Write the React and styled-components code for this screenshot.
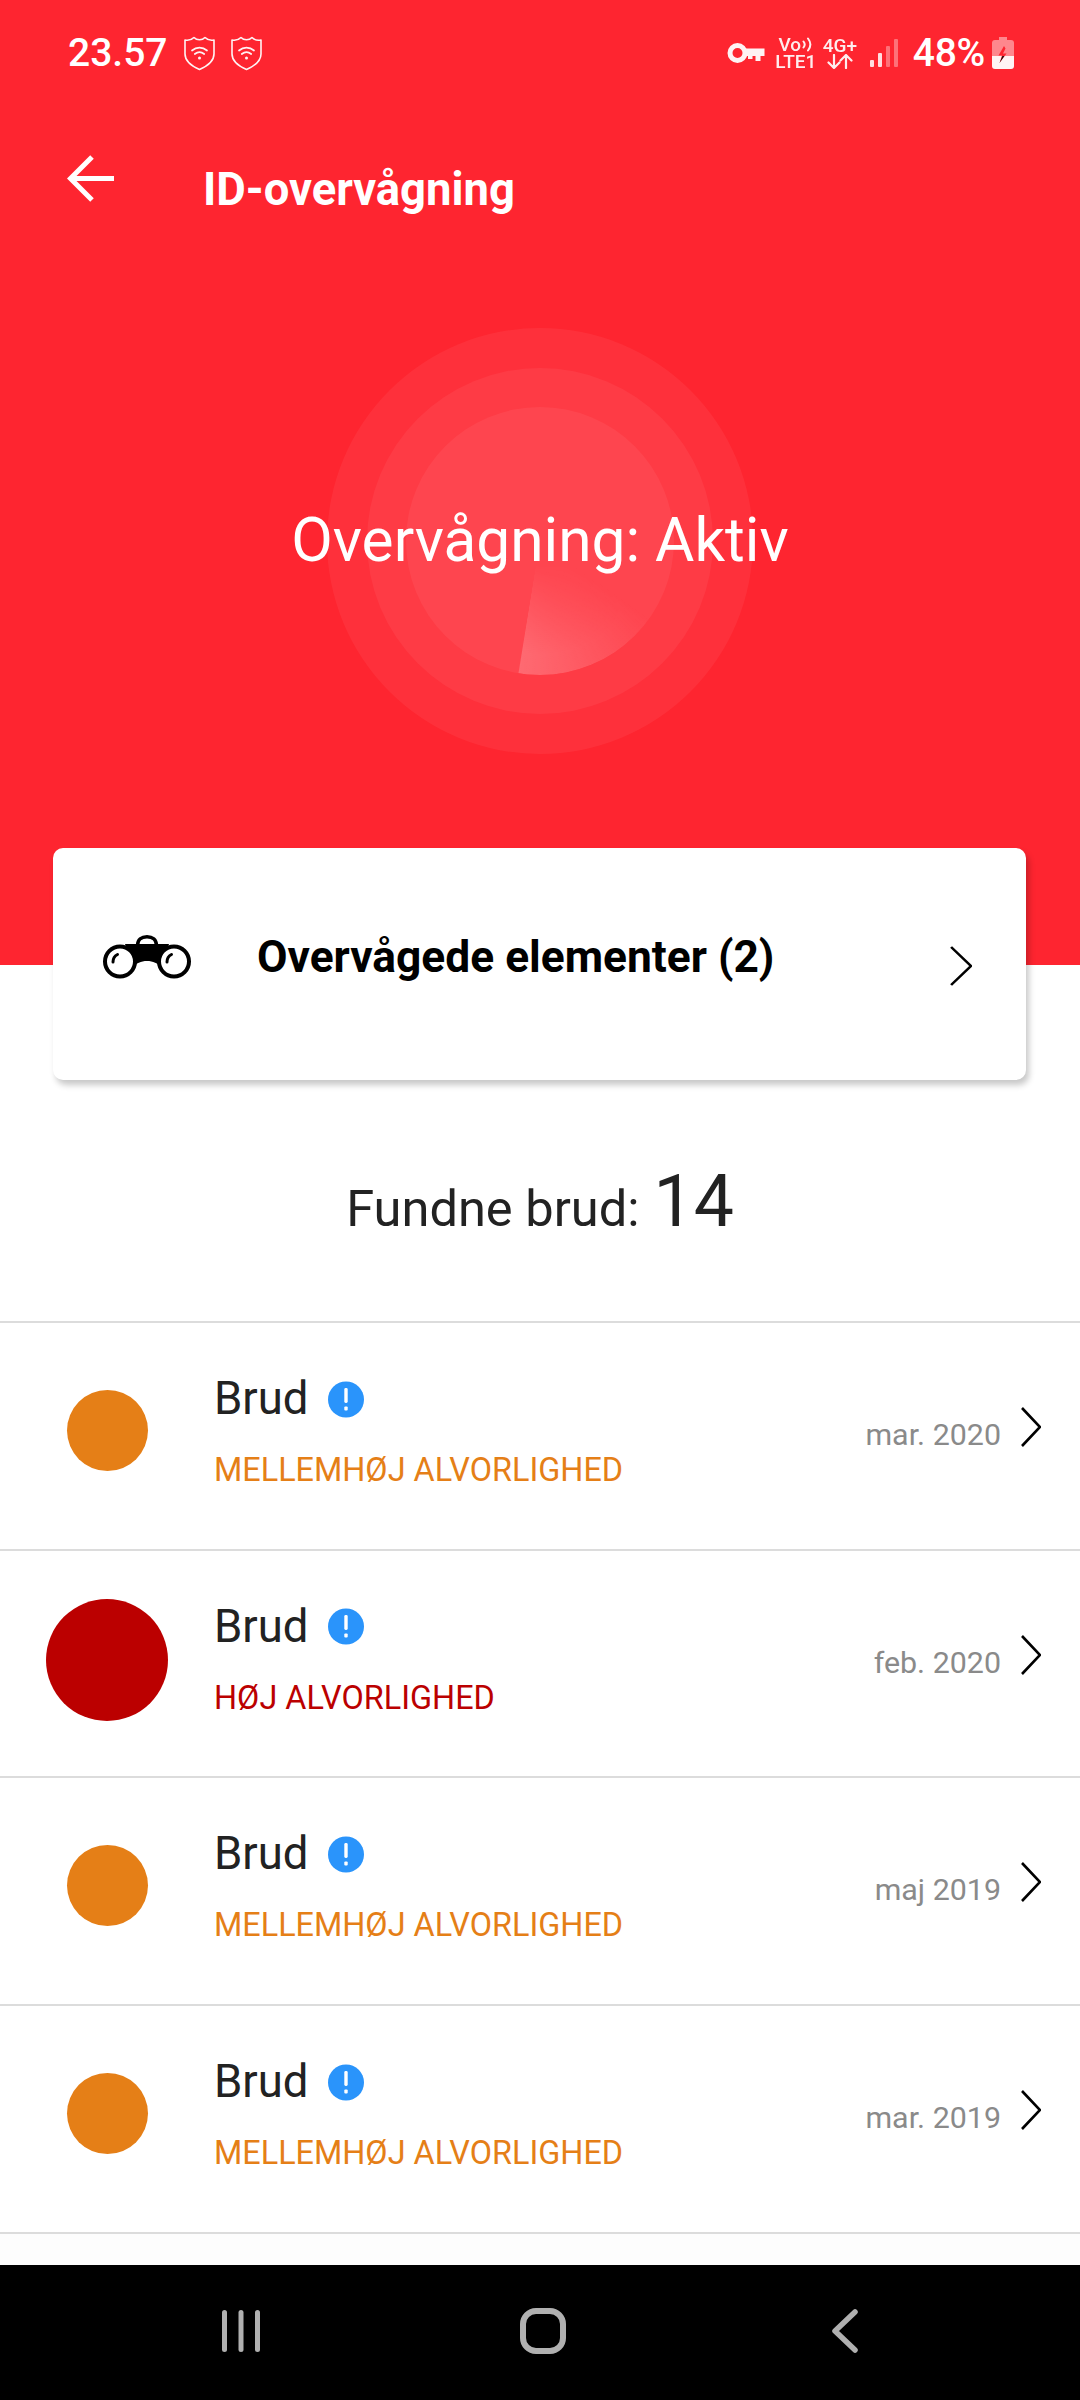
import React from "react";
import styled, { createGlobalStyle } from "styled-components";

const GlobalStyle = createGlobalStyle`
  html, body {
    margin: 0;
    padding: 0;
    background: #fff;
  }
  * {
    box-sizing: border-box;
  }
`;

const Page = styled.div`
  width: 1080px;
  height: 2400px;
  display: flex;
  flex-direction: column;
  overflow: hidden;
  background: #fff;
  font-family: Roboto, "Liberation Sans", sans-serif;
`;

const Header = styled.header`
  height: 965px;
  flex-shrink: 0;
  background: #fe2530;
  color: #fff;
`;

const StatusBar = styled.div`
  height: 150px;
  padding: 31px 66px 0 68px;
  display: flex;
  align-items: flex-start;
  justify-content: space-between;
`;

const StatusGroup = styled.div`
  display: flex;
  align-items: center;
  height: 44px;
`;

const Clock = styled.span`
  font-size: 39px;
  font-weight: 500;
  line-height: 44px;
  margin-right: 15px;
`;

const NetworkStack = styled.div`
  width: ${(p) => p.$width}px;
  margin-left: ${(p) => p.$left || 0}px;
  display: flex;
  flex-direction: column;
  align-items: center;
  font-size: 19px;
  font-weight: 500;
  line-height: 17px;
  opacity: 0.92;
`;

const VoRow = styled.div`
  display: flex;
  align-items: center;
  gap: 1px;
`;

const Percent = styled.span`
  font-size: 39px;
  font-weight: 500;
  line-height: 44px;
  letter-spacing: -0.3px;
`;

const Toolbar = styled.div`
  height: 100px;
  padding: 5px 0 0 67px;
  display: flex;
  align-items: flex-start;
`;

const BackButton = styled.div`
  width: 136px;
  flex-shrink: 0;
  line-height: 0;
`;

const Title = styled.h1`
  margin: 3px 0 0;
  font-size: 45.4px;
  font-weight: 700;
  line-height: 64px;
`;

const RadarWrap = styled.div`
  margin-top: 78px;
  display: flex;
  justify-content: center;
`;

const Ring = styled.div`
  position: relative;
  width: ${(p) => p.$size}px;
  height: ${(p) => p.$size}px;
  border-radius: 50%;
  background: rgba(255, 255, 255, ${(p) => p.$alpha});
  display: flex;
  align-items: center;
  justify-content: center;
`;

const Sweep = styled.div`
  position: absolute;
  inset: 0;
  border-radius: 50%;
  background: conic-gradient(
    from 0deg,
    rgba(255, 255, 255, 0) 0deg,
    rgba(255, 255, 255, 0) 125deg,
    rgba(255, 255, 255, 0.2) 189deg,
    rgba(255, 255, 255, 0) 189.5deg
  );
  mask-image: radial-gradient(circle, rgba(0, 0, 0, 0) 12%, #000 60%);
`;

const RadarLabel = styled.div`
  position: absolute;
  left: 50%;
  top: 50%;
  transform: translate(-50%, -50%);
  font-size: 60.4px;
  line-height: 70px;
  white-space: nowrap;
`;

const ElementsCard = styled.div`
  position: relative;
  z-index: 2;
  margin: -117px 54px 0 53px;
  height: 232px;
  flex-shrink: 0;
  padding: 0 54px 14px 50px;
  display: flex;
  align-items: center;
  background: #fff;
  border-radius: 10px;
  box-shadow: 3px 5px 6px rgba(0, 0, 0, 0.22);
`;

const CardIcon = styled.div`
  width: 154px;
  flex-shrink: 0;
  line-height: 0;
`;

const CardLabel = styled.div`
  flex: 1;
  font-size: 44.3px;
  font-weight: 700;
  line-height: 56px;
  color: #000;
`;

const CardChevron = styled.div`
  line-height: 0;
  margin-top: 18px;
`;

const Summary = styled.div`
  height: 243px;
  flex-shrink: 0;
  padding-top: 80px;
  text-align: center;
  font-size: 50.6px;
  line-height: 84px;
  color: #222;
  border-bottom: 2px solid #dcdcdc;
`;

const SummaryCount = styled.span`
  font-size: 71.5px;
  margin-left: 14px;
`;

const BreachRow = styled.div`
  height: 227.7px;
  flex-shrink: 0;
  display: flex;
  align-items: flex-start;
  border-bottom: 2px solid #dcdcdc;
`;

const DotCell = styled.div`
  width: 214px;
  height: 214px;
  flex-shrink: 0;
  display: flex;
  align-items: center;
  justify-content: center;
`;

const Dot = styled.div`
  width: ${(p) => (p.$high ? 122 : 81)}px;
  height: ${(p) => (p.$high ? 122 : 81)}px;
  margin-top: ${(p) => (p.$high ? 5 : 0)}px;
  border-radius: 50%;
  background: ${(p) => (p.$high ? "#bb0000" : "#e57f17")};
`;

const BreachText = styled.div`
  flex: 1;
  padding-top: 50px;
`;

const BreachTitle = styled.div`
  display: flex;
  align-items: center;
  gap: 19px;
  font-size: 45.5px;
  line-height: 52px;
  color: #222;
`;

const Severity = styled.div`
  margin-top: 25px;
  font-size: 32.4px;
  line-height: 40px;
  color: ${(p) => (p.$high ? "#bb0000" : "#e57f17")};
`;

const BreachMeta = styled.div`
  padding: 84px 39px 0 0;
  display: flex;
  align-items: flex-start;
  gap: 20px;
`;

const DateText = styled.span`
  font-size: 30.4px;
  line-height: 44px;
  color: #8a8a8a;
  margin-top: 6px;
`;

const Spacer = styled.div`
  flex: 1;
  background: #fdfdfd;
`;

const NavBar = styled.nav`
  height: 135px;
  flex-shrink: 0;
  background: #000;
  display: flex;
  align-items: center;
  padding: 0 0 3px 222px;
`;

const NavItem = styled.div`
  margin-right: ${(p) => p.$right || 0}px;
  line-height: 0;
`;

const ShieldIcon = () => (
  <svg width="33" height="36" viewBox="0 0 33 36" fill="none" stroke="#fff" strokeLinecap="round" strokeLinejoin="round" style={{ marginRight: 14, opacity: 0.95 }}>
    <path d="M2 5c3.500.6 7-.4 9-2.500 1.400 1.500 3.400 2.300 5.500 2.300S20.600 4 22 2.500C24 4.600 27.500 5.600 31 5v14c0 7-6.500 12-14.500 15.500C8.500 31 2 26 2 19V5z" strokeWidth="1.600" />
    <path d="M9 15.500c4.500-3.800 10.500-3.800 15 0M11.800 19c3-2.400 6.400-2.400 9.400 0" strokeWidth="1.700" />
    <circle cx="16.500" cy="23" r="1.500" fill="#fff" stroke="none" />
  </svg>
);

const KeyIcon = () => (
  <svg width="38" height="22" viewBox="0 0 38 22" fill="none" style={{ marginRight: 9, opacity: 0.95 }}>
    <circle cx="10.500" cy="11" r="7.500" stroke="#fff" strokeWidth="5" />
    <path d="M18 6.500h19.500v7.500h-4v5h-5v-5h-3v3h-4.500v-3H18z" fill="#fff" />
  </svg>
);

const VoWaves = () => (
  <svg width="11" height="15" viewBox="0 0 11 15" fill="none" stroke="#fff" strokeWidth="2" strokeLinecap="round">
    <path d="M1.500 4.500c1.600 2 1.600 4 0 6M6 1.500c3 3.800 3 8.200 0 12" />
  </svg>
);

const TransferArrows = () => (
  <svg width="26" height="15" viewBox="0 0 26 15" fill="none" stroke="#fff" strokeWidth="2.200" strokeLinecap="round" strokeLinejoin="round">
    <path d="M7 1v12.500M1.500 8.500L7 14l5.500-5.500M19 14V1.500M13.500 6.500L19 1l5.500 5.500" />
  </svg>
);

const SignalBars = () => (
  <svg width="28" height="30" viewBox="0 0 28 30" style={{ margin: "0 15px 0 12px" }}>
    <rect x="0" y="22" width="4" height="7" rx="1" fill="#fff" fillOpacity="0.85" />
    <rect x="8" y="15" width="4" height="14" rx="1" fill="#fff" fillOpacity="0.85" />
    <rect x="16" y="8" width="4" height="21" rx="1" fill="#fff" fillOpacity="0.35" />
    <rect x="24" y="1" width="4" height="28" rx="1" fill="#fff" fillOpacity="0.35" />
  </svg>
);

const BatteryIcon = () => (
  <svg width="22" height="32" viewBox="0 0 22 32" style={{ marginLeft: 7 }}>
    <path d="M7 0h8v3H7z" fill="#fff" fillOpacity="0.45" />
    <path d="M3 3h16a3 3 0 0 1 3 3v13H0V6a3 3 0 0 1 3-3z" fill="#fff" fillOpacity="0.45" />
    <path d="M0 19h22v10a3 3 0 0 1-3 3H3a3 3 0 0 1-3-3z" fill="#fff" fillOpacity="0.95" />
    <path d="M12 9L6.500 18.500h3.500L7.500 26l7-9.500H11l2.500-5z" fill="#fe2530" />
    <path d="M10.500 19L7.500 26l4.800-7z" fill="#111" />
  </svg>
);

const BackArrow = () => (
  <svg width="48" height="48" viewBox="0 0 48 48" fill="none" stroke="#fff" strokeWidth="5">
    <path d="M47 23.500H4M25 2L3.500 23.500 25 45" />
  </svg>
);

const Binoculars = () => (
  <svg width="88" height="44" viewBox="0 0 88 44" fill="none" stroke="#000">
    <path d="M34.500 10.500C34.500 4.500 38.500 1.700 44 1.700s9.500 2.800 9.500 8.800" strokeWidth="3.400" />
    <path d="M22 9h44l-8 24c-3-5-8-7-14-7s-11 2-14 7z" fill="#000" stroke="none" />
    <circle cx="17" cy="26.500" r="15" strokeWidth="4" fill="#fff" />
    <circle cx="71" cy="26.500" r="15" strokeWidth="4" fill="#fff" />
    <path d="M10 27c0-3.500 1.500-6 4.500-7.500M64 27c0-3.500 1.500-6 4.500-7.500" strokeWidth="3" strokeLinecap="round" />
  </svg>
);

const Chevron = ({ w = 20, h = 40, stroke = 2.6 }) => (
  <svg width={w} height={h} viewBox="0 0 20 40" fill="none" stroke="#000" strokeWidth={stroke} preserveAspectRatio="none">
    <path d="M1 1l18 19L1 39" />
  </svg>
);

const InfoIcon = () => (
  <svg width="36" height="37" viewBox="0 0 36 37">
    <circle cx="18" cy="18.500" r="18" fill="#2a94fb" />
    <rect x="16.300" y="7" width="3.400" height="15" rx="1.400" fill="#fff" />
    <rect x="16.300" y="25.500" width="3.400" height="4" rx="1" fill="#fff" />
  </svg>
);

const RecentsIcon = () => (
  <svg width="38" height="44" viewBox="0 0 38 44" fill="#b0b0b0">
    <rect x="0" y="1" width="5" height="42" rx="2.500" />
    <rect x="16.500" y="1" width="5" height="42" rx="2.500" />
    <rect x="33" y="1" width="5" height="42" rx="2.500" />
  </svg>
);

const HomeIcon = () => (
  <svg width="46" height="46" viewBox="0 0 46 46" fill="none" stroke="#b0b0b0" strokeWidth="6">
    <rect x="3" y="3" width="40" height="40" rx="13" />
  </svg>
);

const NavBackIcon = () => (
  <svg width="26" height="44" viewBox="0 0 26 44" fill="none" stroke="#b0b0b0" strokeWidth="5.500" strokeLinecap="round" strokeLinejoin="round">
    <path d="M23 3L3 22l20 19" />
  </svg>
);

const breaches = [
  { date: "mar. 2020" },
  { date: "feb. 2020", high: true },
  { date: "maj 2019" },
  { date: "mar. 2019" },
];

export default function App() {
  return (
    <Page>
      <GlobalStyle />
      <Header>
        <StatusBar>
          <StatusGroup>
            <Clock>23.57</Clock>
            <ShieldIcon />
            <ShieldIcon />
          </StatusGroup>
          <StatusGroup>
            <KeyIcon />
            <NetworkStack $width={44}>
              <VoRow>
                Vo
                <VoWaves />
              </VoRow>
              <div>LTE1</div>
            </NetworkStack>
            <NetworkStack $width={36} $left={4}>
              <div>4G+</div>
              <TransferArrows />
            </NetworkStack>
            <SignalBars />
            <Percent>48%</Percent>
            <BatteryIcon />
          </StatusGroup>
        </StatusBar>
        <Toolbar>
          <BackButton>
            <BackArrow />
          </BackButton>
          <Title>ID-overvågning</Title>
        </Toolbar>
        <RadarWrap>
          <Ring $size={426} $alpha={0.055}>
            <Ring $size={346} $alpha={0.055}>
              <Ring $size={268} $alpha={0.055}>
                <Sweep />
              </Ring>
            </Ring>
            <RadarLabel>Overvågning: Aktiv</RadarLabel>
          </Ring>
        </RadarWrap>
      </Header>
      <ElementsCard>
        <CardIcon>
          <Binoculars />
        </CardIcon>
        <CardLabel>Overvågede elementer (2)</CardLabel>
        <CardChevron>
          <Chevron w={22} h={40} stroke={2.4} />
        </CardChevron>
      </ElementsCard>
      <Summary>
        Fundne brud:
        <SummaryCount>14</SummaryCount>
      </Summary>
      {breaches.map((item) => (
        <BreachRow key={item.date}>
          <DotCell>
            <Dot $high={item.high} />
          </DotCell>
          <BreachText>
            <BreachTitle>
              Brud
              <InfoIcon />
            </BreachTitle>
            <Severity $high={item.high}>
              {item.high ? "HØJ ALVORLIGHED" : "MELLEMHØJ ALVORLIGHED"}
            </Severity>
          </BreachText>
          <BreachMeta>
            <DateText>{item.date}</DateText>
            <Chevron />
          </BreachMeta>
        </BreachRow>
      ))}
      <Spacer />
      <NavBar>
        <NavItem $right={260}>
          <RecentsIcon />
        </NavItem>
        <NavItem $right={266}>
          <HomeIcon />
        </NavItem>
        <NavItem>
          <NavBackIcon />
        </NavItem>
      </NavBar>
    </Page>
  );
}
